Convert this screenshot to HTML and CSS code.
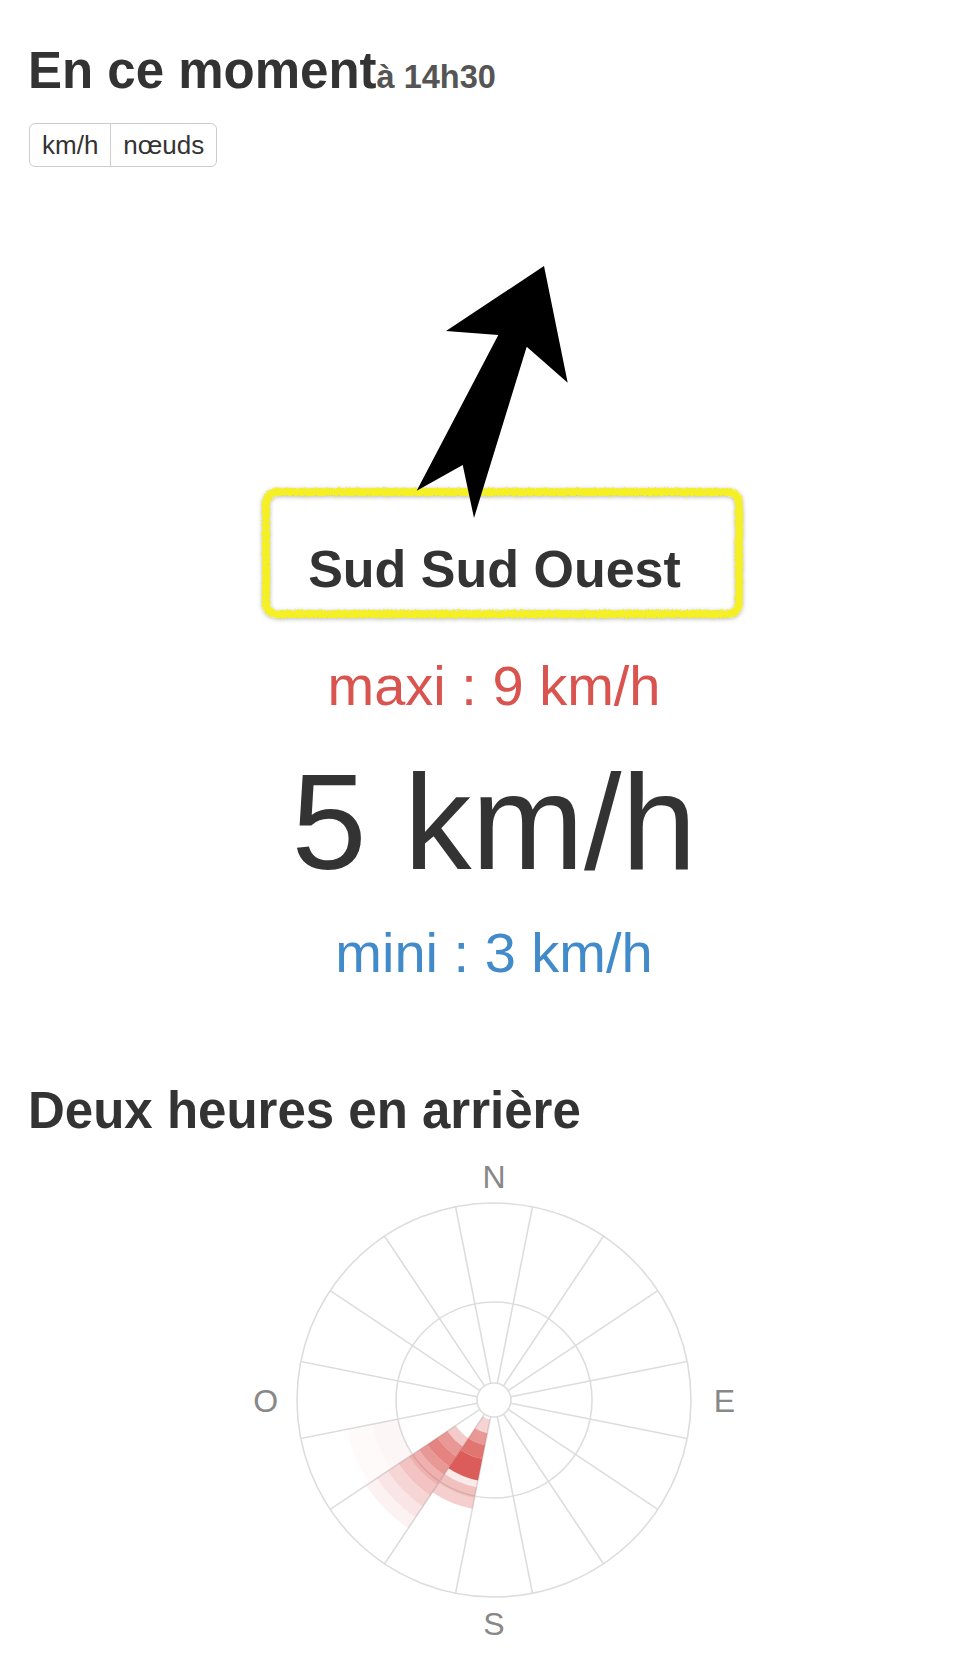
FILE: index.html
```html
<!DOCTYPE html>
<html lang="fr">
<head>
<meta charset="utf-8">
<title>Vent</title>
<link rel="stylesheet" href="styles.css">
</head>
<body>
<svg class="defs" aria-hidden="true">
  <filter id="rough" x="-5%" y="-10%" width="110%" height="120%">
    <feTurbulence type="fractalNoise" baseFrequency="0.9" numOctaves="2" seed="3" result="noise"/>
    <feDisplacementMap in="SourceGraphic" in2="noise" scale="4.5" xChannelSelector="R" yChannelSelector="G"/>
  </filter>
</svg>
<div class="page">
  <h1 class="title">En ce moment<small class="time">à 14h30</small></h1>
  <div class="units">
    <button class="unit first">km/h</button><button class="unit last">nœuds</button>
  </div>

  <div class="now">
    <svg class="arrow" width="190" height="238" viewBox="0 0 190 238">
      <polygon points="145,16 168.7,132.7 127.7,96.7 75,268 63.7,215 17.7,240.7 99.3,85 47,81" fill="#000"/>
    </svg>
    <div class="dir-box">Sud Sud Ouest</div>
    <div class="maxi">maxi : 9 km/h</div>
    <div class="speed">5 km/h</div>
    <div class="mini">mini : 3 km/h</div>
  </div>

  <h2 class="title history">Deux heures en arrière</h2>
  <div class="rose-wrap">
    <svg class="rose" width="520" height="526" viewBox="0 0 520 526">
      <g class="grid" transform="translate(260,260)">
        <circle r="197"/>
        <circle r="98"/>
        <circle r="17"/>
        <line y1="-17" y2="-197" transform="rotate(11.25)"/>
        <line y1="-17" y2="-197" transform="rotate(33.75)"/>
        <line y1="-17" y2="-197" transform="rotate(56.25)"/>
        <line y1="-17" y2="-197" transform="rotate(78.75)"/>
        <line y1="-17" y2="-197" transform="rotate(101.25)"/>
        <line y1="-17" y2="-197" transform="rotate(123.75)"/>
        <line y1="-17" y2="-197" transform="rotate(146.25)"/>
        <line y1="-17" y2="-197" transform="rotate(168.75)"/>
        <line y1="-17" y2="-197" transform="rotate(191.25)"/>
        <line y1="-17" y2="-197" transform="rotate(213.75)"/>
        <line y1="-17" y2="-197" transform="rotate(236.25)"/>
        <line y1="-17" y2="-197" transform="rotate(258.75)"/>
        <line y1="-17" y2="-197" transform="rotate(281.25)"/>
        <line y1="-17" y2="-197" transform="rotate(303.75)"/>
        <line y1="-17" y2="-197" transform="rotate(326.25)"/>
        <line y1="-17" y2="-197" transform="rotate(348.75)"/>
      </g>
      <!-- SSW sector -->
      <g class="sector" transform="translate(260,260) rotate(101.25)">
        <circle r="27" stroke-width="14" stroke-dasharray="10.603 10000" stroke-opacity=".25"/>
        <circle r="40" stroke-width="12" stroke-dasharray="15.708 10000" stroke-opacity=".6"/>
        <circle r="53" stroke-width="14" stroke-dasharray="20.813 10000" stroke-opacity=".8"/>
        <circle r="71" stroke-width="22" stroke-dasharray="27.882 10000" stroke-opacity=".95"/>
        <circle r="85.5" stroke-width="7" stroke-dasharray="33.576 10000" stroke-opacity=".12"/>
        <circle r="94.5" stroke-width="11" stroke-dasharray="37.110 10000" stroke-opacity=".36"/>
        <circle r="105.5" stroke-width="11" stroke-dasharray="41.430 10000" stroke-opacity=".28"/>
      </g>
      <!-- SW sector -->
      <g class="sector" transform="translate(260,260) rotate(123.75)">
        <circle r="51" stroke-width="10" stroke-dasharray="20.028 10000" stroke-opacity=".3"/>
        <circle r="62" stroke-width="12" stroke-dasharray="24.347 10000" stroke-opacity=".6"/>
        <circle r="74" stroke-width="12" stroke-dasharray="29.060 10000" stroke-opacity=".72"/>
        <circle r="85" stroke-width="10" stroke-dasharray="33.379 10000" stroke-opacity=".6"/>
        <circle r="96" stroke-width="12" stroke-dasharray="37.699 10000" stroke-opacity=".45"/>
        <circle r="108.5" stroke-width="13" stroke-dasharray="42.608 10000" stroke-opacity=".35"/>
        <circle r="121.5" stroke-width="13" stroke-dasharray="47.713 10000" stroke-opacity=".24"/>
        <circle r="134.5" stroke-width="13" stroke-dasharray="52.818 10000" stroke-opacity=".15"/>
        <circle r="147.5" stroke-width="13" stroke-dasharray="57.923 10000" stroke-opacity=".08"/>
      </g>
      <!-- WSW sector -->
      <g class="sector" transform="translate(260,260) rotate(146.25)">
        <circle r="111" stroke-width="26" stroke-dasharray="43.590 10000" stroke-opacity=".05"/>
        <circle r="137" stroke-width="26" stroke-dasharray="53.800 10000" stroke-opacity=".03"/>
      </g>
      <g class="labels">
        <text x="260" y="47.5">N</text>
        <text x="260" y="494.5">S</text>
        <text x="31.6" y="271.5">O</text>
        <text x="490.5" y="271.5">E</text>
      </g>
    </svg>
  </div>
</div>
</body>
</html>
```
FILE: styles.css
```css
html, body {
  margin: 0;
  padding: 0;
  background: #fff;
}

body {
  font-family: "Liberation Sans", Arial, sans-serif;
  color: #333;
}

.defs {
  position: absolute;
  width: 0;
  height: 0;
  overflow: hidden;
}

.page {
  padding-left: 28px;
}

.title {
  margin: 43px 0 0;
  font-size: 51px;
  line-height: 56px;
  font-weight: bold;
  color: #333;
}

.time {
  font-size: 32.5px;
  line-height: 1;
  font-weight: bold;
  color: #555;
}

.units {
  display: flex;
  margin: 24px 0 0 1px;
}

.unit {
  font-family: "Liberation Sans", Arial, sans-serif;
  font-size: 26px;
  line-height: 30px;
  color: #333;
  background: #fff;
  border: 1px solid #ccc;
  padding: 6px 12px;
  margin: 0;
}

.unit.first {
  border-radius: 6px 0 0 6px;
}

.unit.last {
  border-radius: 0 6px 6px 0;
  margin-left: -1px;
}

.now {
  margin-left: 6px;
  text-align: center;
}

.arrow {
  display: block;
  margin: 83px auto 0;
  overflow: visible;
  position: relative;
  z-index: 1;
}

.dir-box {
  position: relative;
  box-sizing: border-box;
  width: 481px;
  margin: 0 0 0 228px;
  padding: 51px 16px 19px 0;
  font-size: 52px;
  line-height: 60px;
  font-weight: bold;
  color: #333;
}

.dir-box::before {
  content: "";
  position: absolute;
  inset: 0;
  border: 8px solid #f5f025;
  border-radius: 15px;
  filter: url(#rough) drop-shadow(0 1px 2px rgba(0, 0, 0, 0.28));
}

.maxi,
.mini {
  font-size: 56px;
  line-height: 60px;
}

.maxi {
  margin-top: 38px;
  color: #d9534f;
}

.speed {
  margin-top: 35px;
  font-size: 135px;
  line-height: 144px;
  color: #333;
}

.mini {
  margin-top: 28px;
  color: #428bca;
}

.history {
  margin-top: 100px;
}

.rose-wrap {
  margin-left: 6px;
}

.rose {
  display: block;
  margin: 1px auto 0;
}

.grid circle,
.grid line {
  fill: none;
  stroke: #dddddd;
  stroke-width: 1.6;
}

.sector circle {
  fill: none;
  stroke: #d9534f;
}

.labels text {
  font-family: "Liberation Sans", Arial, sans-serif;
  font-size: 32px;
  fill: #888;
  text-anchor: middle;
}
```
